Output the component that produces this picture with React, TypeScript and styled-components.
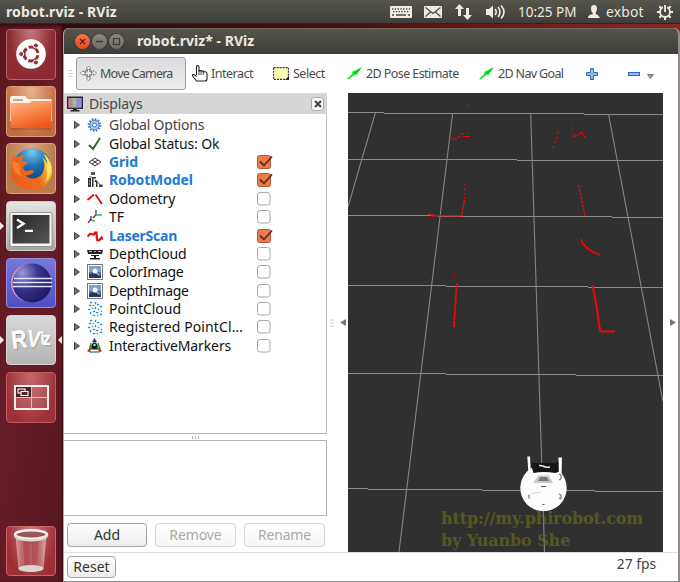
import React from "react";
import styled, { createGlobalStyle, css } from "styled-components";

const Global = createGlobalStyle`
  * { box-sizing: border-box; }
  html, body { margin: 0; padding: 0; overflow: hidden; }
  body { font-family: "Noto Sans", "Open Sans", sans-serif; font-size: 14px; color: #111; }
  svg { display: block; flex: none; }
`;

const Desktop = styled.div`
  width: 680px;
  height: 582px;
  display: flex;
  flex-direction: column;
  background: linear-gradient(90deg, #2e0b0b 0%, #4a0d0d 50%, #8a2a20 100%);
`;

const TopBar = styled.header`
  height: 24px;
  flex: none;
  display: flex;
  align-items: center;
  padding: 0 7px 0 6px;
  background: linear-gradient(#57564d, #3e3d39);
  border-bottom: 1px solid #2b2522;
  color: #ece8e0;
`;

const Text = styled.span<{ $size?: number; $ls?: number; $bold?: boolean; $color?: string }>`
  font-size: ${(p) => p.$size ?? 14}px;
  letter-spacing: ${(p) => p.$ls ?? 0}px;
  font-weight: ${(p) => (p.$bold ? 700 : 400)};
  color: ${(p) => p.$color ?? "inherit"};
  line-height: 18px;
  white-space: nowrap;
`;

const Indicators = styled.div`
  margin-left: auto;
  display: flex;
  align-items: center;
`;

const Indicator = styled.div<{ $w: number }>`
  width: ${(p) => p.$w}px;
  height: 24px;
  display: flex;
  align-items: center;
`;

const Workspace = styled.div`
  flex: 1;
  min-height: 0;
  display: flex;
`;

const Launcher = styled.nav`
  width: 63px;
  flex: none;
  padding: 5px 0 6px 0;
  display: flex;
  flex-direction: column;
  gap: 6.7px;
  background: linear-gradient(100deg, #5d1620 0%, #661d28 50%, #571620 100%);
  box-shadow: inset 0 4px 3px -2px #350c12, inset -2px 0 1px #43151a;
`;

const Slot = styled.div<{ $last?: boolean }>`
  height: 50.5px;
  display: grid;
  grid-template-columns: 6px 50px 7px;
  align-items: center;
  ${(p) => p.$last && css`margin-top: auto;`}
`;

const Tile = styled.div<{ $bg: string; $edge: string }>`
  grid-column: 2;
  height: 50.5px;
  border-radius: 4px;
  border: 1px solid ${(p) => p.$edge};
  background: ${(p) => p.$bg};
  display: flex;
  align-items: center;
  justify-content: center;
  overflow: hidden;
`;

const Pip = styled.i<{ $right?: boolean }>`
  grid-row: 1;
  grid-column: ${(p) => (p.$right ? 3 : 1)};
  justify-self: ${(p) => (p.$right ? "end" : "start")};
  width: 0;
  height: 0;
  border: 4px solid transparent;
  ${(p) =>
    p.$right
      ? css`border-left: 0; border-right-color: #eee; margin-right: 1px;`
      : css`border-right: 0; border-left-color: #eee;`}
`;

const Window = styled.main`
  width: 617px;
  margin-top: 4px;
  display: flex;
  flex-direction: column;
  border-radius: 6px 6px 0 0;
  overflow: hidden;
  background: #fff;
  border-left: 1px solid #aaa6a4;
  border-right: 2px solid #918e87;
  border-bottom: 1px solid #8b8b8b;
`;

const TitleBar = styled.div`
  height: 26px;
  flex: none;
  margin: 0 -2px 0 -1px;
  display: flex;
  align-items: center;
  gap: 2px;
  padding-left: 12px;
  background: linear-gradient(#55544c, #3d3c38);
  border-top: 1px solid #6c6a62;
  color: #ece8df;
`;

const WinButton = styled.div<{ $close?: boolean }>`
  width: 15px;
  height: 15px;
  border-radius: 50%;
  background: ${(p) => (p.$close ? "linear-gradient(#f7754a, #e4491c)" : "linear-gradient(#8b8982, #6d6b65)")};
  box-shadow: 0 0 0 0.6px #2f2d2a;
`;

const Caption = styled.div`
  margin-left: 11px;
  padding-bottom: 1px;
  line-height: 18px;
`;

const Toolbar = styled.div`
  height: 39px;
  flex: none;
  display: flex;
  align-items: center;
  padding-left: 4px;
  color: #4b4b4b;
`;

const Grip = styled.div`
  width: 5px;
  height: 8px;
  margin-right: 3px;
  background: repeating-linear-gradient(#d8d8d8 0 1px, transparent 1px 3px);
`;

const ActiveTool = styled.div`
  width: 110px;
  height: 33px;
  margin-right: 6px;
  border: 1px solid #a0a0a0;
  border-radius: 3px;
  background: linear-gradient(#dcdcdc, #ececec);
  display: flex;
  align-items: center;
  gap: 3px;
  padding-left: 3px;
`;

const Tool = styled.div<{ $w: number; $gap?: number }>`
  width: ${(p) => p.$w}px;
  display: flex;
  align-items: center;
  gap: ${(p) => p.$gap ?? 4}px;
`;

const Body = styled.div`
  height: 459px;
  flex: none;
  display: flex;
`;

const Dock = styled.section`
  width: 263px;
  flex: none;
  display: flex;
  flex-direction: column;
`;

const DockHeader = styled.div`
  height: 21px;
  flex: none;
  display: flex;
  align-items: center;
  padding: 0 3px 0 3px;
  gap: 6px;
  background: #d6d6d6;
  color: #4a4a4a;
`;

const CloseDock = styled.button`
  margin-left: auto;
  width: 13px;
  height: 14px;
  padding: 0;
  border: 1px solid #aaa;
  border-radius: 3px;
  background: #f7f7f7;
  display: flex;
  align-items: center;
  justify-content: center;
`;

const Tree = styled.ul`
  height: 320px;
  flex: none;
  margin: 0;
  padding: 2px 0 0;
  list-style: none;
  border-right: 1px solid #bdbdbd;
  border-bottom: 1px solid #b4b4b4;
`;

const Row = styled.li`
  height: 18.4px;
  display: grid;
  grid-template-columns: 10px 13px 22px 148px 16px;
  align-items: center;
`;

const Check = styled.div`
  width: 16px;
  height: 16px;
`;

const Splitter = styled.div`
  height: 6px;
  flex: none;
  display: flex;
  align-items: center;
  justify-content: center;
  gap: 2px;
  i { width: 1px; height: 3px; background: #b5b5b5; }
`;

const Description = styled.div`
  height: 76px;
  flex: none;
  border: 1px solid #b5b5b5;
  border-left: 0;
`;

const Actions = styled.div`
  display: flex;
  gap: 8px;
  padding: 7px 0 0 3px;
`;

const Button = styled.button<{ $w: number; $h?: number }>`
  width: ${(p) => p.$w}px;
  height: ${(p) => p.$h ?? 24}px;
  padding: 0;
  font-family: inherit;
  display: flex;
  align-items: center;
  justify-content: center;
  border-radius: 4px;
  border: 1px solid #a3a3a3;
  background: linear-gradient(#fff, #ececec);
  color: #333;
  &:disabled {
    border-color: #d4d4d4;
    background: linear-gradient(#fff, #f6f6f6);
    color: #aaa;
  }
`;

const Handle = styled.div<{ $w: number }>`
  width: ${(p) => p.$w}px;
  flex: none;
  display: flex;
  align-items: center;
  justify-content: center;
  gap: 6px;
`;

const RightHandle = styled(Handle)`
  padding-left: 5px;
`;

const Viewport = styled.section`
  width: 315px;
  height: 459px;
  flex: none;
  position: relative;
  background: #303030;
  overflow: hidden;
`;

const Watermark = styled.div`
  position: absolute;
  left: 93px;
  top: 415px;
  font: 700 16px/22px "DejaVu Serif", serif;
  color: rgba(112, 112, 20, 0.62);
  white-space: nowrap;
`;
const MarkLine = styled.span<{ $ls: number }>`
  display: block;
  letter-spacing: ${(p) => p.$ls}px;
`;

const StatusBar = styled.footer`
  flex: 1;
  display: flex;
  justify-content: space-between;
  align-items: flex-start;
  padding: 3px 22px 0 3px;
  border-top: 1px solid #dedede;
  color: #444;
`;

const Fps = styled(Text)`
  margin-top: -1px;
`;

/* ---------- launcher art ---------- */

const DashIcon = () => (
  <svg width="32" height="32" viewBox="0 0 32 32">
    <circle cx="16" cy="16" r="14.8" fill="#fff" />
    <circle cx="16" cy="16" r="7" fill="none" stroke="#962f36" strokeWidth="3" strokeDasharray="12.4 2.2" strokeDashoffset="-1.2" />
    {[180, 60, -60].map((a) => (
      <circle key={a} cx={16 + 9.8 * Math.cos((a * Math.PI) / 180)} cy={16 + 9.8 * Math.sin((a * Math.PI) / 180)} r="2.5" fill="#962f36" stroke="#fff" strokeWidth="1" />
    ))}
  </svg>
);

const FolderIcon = () => (
  <svg width="48" height="48" viewBox="0 0 48 48">
    <defs>
      <linearGradient id="fold" x1="0" y1="0" x2=".5" y2="1">
        <stop offset="0" stopColor="#fdb98c" />
        <stop offset=".5" stopColor="#f98a4c" />
        <stop offset="1" stopColor="#ee5a1b" />
      </linearGradient>
    </defs>
    <path d="M3 11q0-2 2-2h13l3 3h22q2 0 2 2v20H3z" fill="#fbf4ee" />
    <path d="M6 12h10v2H6z" fill="#e8a075" />
    <path d="M3 16h19l3-2h20l-1 25q0 2-2 2H6q-2 0-2-2z" fill="url(#fold)" />
    <path d="M4 42h40" stroke="#7c3d20" strokeWidth="1" opacity=".6" />
  </svg>
);

const FirefoxIcon = () => (
  <svg width="48" height="48" viewBox="0 0 48 48">
    <defs>
      <radialGradient id="ffb" cx=".5" cy=".1" r=".85">
        <stop offset="0" stopColor="#7acdf0" />
        <stop offset=".45" stopColor="#1d70b5" />
        <stop offset="1" stopColor="#123a77" />
      </radialGradient>
      <linearGradient id="fft" x1="0" y1=".7" x2="1" y2=".3">
        <stop offset="0" stopColor="#ea5a1e" />
        <stop offset=".6" stopColor="#ee6f1c" />
        <stop offset="1" stopColor="#ffdc3c" />
      </linearGradient>
    </defs>
    <circle cx="25" cy="22" r="18.800" fill="url(#ffb)" />
    <path d="M5 17c0-3 1-5 2-7 1 1 2 2 3 2 2-1 5-2 8-1-2 1-3 3-3 5 2 0 4 0 6 1-1 3-4 3-5 5 0 2 1 3 3 4 3 0 5-2 8 0-2 4-6 5-9 4 5 6 15 4 18-3 2-5 2-10-1-15 3 2 4 4 5 6 0-4-1-7-3-9 5 4 8 10 8 17 0 11-9 19-20 19C12 45 4 36 4 27c0-4 0-7 1-10z" fill="url(#fft)" />
    <path d="M5 17c3-1 6 0 9 4-2 3-1 7 1 10-6-1-9-6-10-14z" fill="#f48b34" opacity=".75" />
    <path d="M36 9c6 4 9 10 8 17-1 5-3 9-6 11 3-6 3-13 0-19 2 1 3 3 4 4-1-5-3-9-6-13z" fill="#fbe565" />
  </svg>
);

const TerminalIcon = () => (
  <svg width="48" height="48" viewBox="0 0 48 48">
    <defs>
      <linearGradient id="term" x1="0" y1="0" x2="1" y2="1">
        <stop offset="0" stopColor="#262626" />
        <stop offset="1" stopColor="#555" />
      </linearGradient>
    </defs>
    <rect x="3" y="10.500" width="42" height="34" rx="1.500" fill="#f6f6f4" stroke="#777" strokeWidth=".7" />
    <rect x="5.500" y="13" width="37" height="28.500" fill="url(#term)" />
    <path d="M10 17.500l6.500 4.200-6.500 4.200" fill="none" stroke="#fff" strokeWidth="2.400" />
    <path d="M18 28.800h8" stroke="#fff" strokeWidth="2.200" />
  </svg>
);

const EclipseIcon = () => (
  <svg width="48" height="48" viewBox="0 0 48 48">
    <defs>
      <radialGradient id="ecl" cx=".25" cy=".25" r=".9">
        <stop offset="0" stopColor="#9a9add" />
        <stop offset=".45" stopColor="#39338f" />
        <stop offset="1" stopColor="#1b1557" />
      </radialGradient>
    </defs>
    <circle cx="23" cy="24" r="19" fill="#e59bc0" />
    <circle cx="25" cy="24" r="19.500" fill="url(#ecl)" />
    <path d="M7 19.500h38M6 23.500h39M6 27.500h39" stroke="#dfe3ff" strokeWidth="1.300" />
  </svg>
);

const RvizWord = styled.div`
  display: flex;
  align-items: center;
  font-family: "Liberation Sans", sans-serif;
  font-weight: 700;
  color: #fdfdfd;
  -webkit-text-stroke: 0.7px #fdfdfd;
  text-shadow: 1px 1px 1px #777, 0 0 1px #888;
  padding-bottom: 2px;
`;
const RvizLetter = styled.span<{ $s: number; $r: number }>`
  display: inline-block;
  line-height: 26px;
  font-size: ${(p) => p.$s}px;
  transform: rotate(${(p) => p.$r}deg) scaleX(0.84);
  margin: 0 -1px;
`;

const WorkspacesIcon = () => (
  <svg width="48" height="48" viewBox="0 0 48 48">
    <rect x="8" y="13" width="33" height="23" fill="#ffffff18" stroke="#fff" strokeWidth="1.800" />
    <path d="M24.500 13v23M8 24.500h33" stroke="#e7bcbc" strokeWidth="1" />
    <rect x="9" y="14" width="15" height="10" fill="#4d2024" />
    <rect x="11" y="16" width="7" height="4" fill="none" stroke="#fff" strokeWidth="1.100" />
    <rect x="14" y="18.500" width="7" height="4" fill="#4d2024" stroke="#fff" strokeWidth="1.100" />
  </svg>
);

const TrashIcon = () => (
  <svg width="48" height="48" viewBox="0 0 48 48">
    <defs>
      <linearGradient id="tr" x1="0" x2="1" y1="0" y2="0">
        <stop offset="0" stopColor="#d9a5a5" />
        <stop offset=".3" stopColor="#b04c4f" />
        <stop offset=".7" stopColor="#b3565a" />
        <stop offset="1" stopColor="#dcabab" />
      </linearGradient>
    </defs>
    <path d="M8.500 8l3 34q12.500 6 25 0l3-34z" fill="url(#tr)" />
    <ellipse cx="24" cy="41.500" rx="12.500" ry="3.500" fill="#ddd5d2" />
    <ellipse cx="24" cy="7.500" rx="16" ry="4.300" fill="#9b5555" stroke="#f4f1ee" strokeWidth="2.500" />
    <path d="M8 9q1 4 16 4.500Q39 13 40 9" fill="none" stroke="#dcd8d4" strokeWidth="2" />
    <path d="M15 16l2 23M24 17v22M33 16l-2 23" stroke="#c98284" strokeWidth=".5" />
  </svg>
);

/* ---------- tree icons, 16 x 16 ---------- */

const Photo = () => (
  <>
    <rect x=".5" y=".5" width="15" height="15" fill="#fff" stroke="#777" />
    <rect x="2" y="2" width="12" height="12" fill="#4f6d9e" />
    <path d="M2 2h12v6H2z" fill="#7fa0cb" />
    <path d="M2 11q4-3 7-1l5 1v3H2z" fill="#24375f" />
    <circle cx="8" cy="7" r="2.500" fill="#f3f6fa" />
    <path d="M9.500 9l3 2.500" stroke="#eee" strokeWidth="1" />
  </>
);
const Points = () => (
  <path
    d="M3 1h2v1H3zM8 1h1v2H8zM2 4h2v1H2zM6 4h1v1H6zM10 3h2v1h-2zM13 5h2v1h-2zM1 8h2v1H1zM5 7h1v1H5zM8 6h1v2H8zM11 8h1v1h-1zM14 10h1v1h-1zM3 11h1v2H3zM6 10h2v1H6zM9 11h2v1H9zM13 13h2v1h-2zM6 14h2v1H6zM10 14h1v1h-1z"
    fill="#2a8be0"
    stroke="#2a8be0"
    strokeWidth=".4"
  />
);

const treeIcons: Record<string, React.ReactNode> = {
  gear: (
    <>
      <circle cx="7.500" cy="8" r="5.800" fill="none" stroke="#3c78c4" strokeWidth="2" strokeDasharray="1.500 1.500" />
      <circle cx="7.500" cy="8" r="4.800" fill="#a9c8ee" stroke="#3c78c4" strokeWidth="1" />
      <circle cx="7.500" cy="8" r="2" fill="#fff" stroke="#3c78c4" strokeWidth="1" />
    </>
  ),
  ok: <path d="M2 9l4 4L13 2" fill="none" stroke="#1d6f1d" strokeWidth="1.900" />,
  grid: <path d="M8 4l6 4-6 4-6-4zM5 6l6 4M11 6l-6 4" fill="none" stroke="#333" strokeWidth="1" />,
  robot: (
    <>
      <path d="M4 0h4v3H4z" fill="#556" />
      <path d="M1 6h3v9H1z" fill="#333" />
      <path d="M5 5h4v1.500H6.500V15H5zM8 7.500l2.500 1.500v6H9v-5H7.500zM12.500 12.500h3V15H12z" fill="#333" />
      <path d="M2 5h3M11 10l2 3" stroke="#666" />
      <path d="M2 9h1M2 12h1" stroke="#eee" />
    </>
  ),
  odom: <path d="M.5 9L7 3.500M8.500 3.500L15 13" fill="none" stroke="#d91010" strokeWidth="1.800" />,
  tf: (
    <>
      <path d="M4 10L9 5" stroke="#d8c030" />
      <path d="M1 14l3-4M9 6l-3 3" stroke="#c22" strokeWidth="1.400" />
      <path d="M4 7v5M9 1v5" stroke="#23c" strokeWidth="1.300" />
      <path d="M4 11l4 1M9 6h6" stroke="#3b3" strokeWidth="1.300" />
    </>
  ),
  laser: <path d="M.5 8.500l2.500-2.500 4 .5 1-2h1.500l.5 7.500 2 .5 2.500-3 1.500 2" fill="none" stroke="#dc1212" strokeWidth="2.200" />,
  depth: (
    <>
      <path d="M0 4h16l-1 4H1z" fill="#222" />
      <path d="M2 5h3v1H2zM7 5h2v1H7zM11 5h3v1h-3z" fill="#bbb" />
      <path d="M4 9h8v1H4zM7 10h2v2H7zM3 12h10v1.500H3z" fill="#222" />
    </>
  ),
  photo: <Photo />,
  points: <Points />,
  markers: (
    <>
      <path d="M7.500 2l5 9h-10z" fill="#777" />
      <path d="M7.500 0L10 4H5z" fill="#23a" />
      <path d="M4 5L2.500 11H13L11 5" fill="none" stroke="#282" strokeWidth="1.300" />
      <path d="M0 13l3-3 1 5zM15 13l-3-3-1 5z" fill="#c22" />
      <circle cx="7.500" cy="8" r="3" fill="#111" />
      <circle cx="7.500" cy="7" r="1.200" fill="#ddd" />
      <path d="M4 14h7" stroke="#29c" strokeWidth="1.500" />
    </>
  ),
};

type Item = { icon: string; label: string; ls?: number; on?: boolean; plain?: boolean; color?: string };
const items: Item[] = [
  { icon: "gear", label: "Global Options", ls: -0.2, plain: true, color: "#444" },
  { icon: "ok", label: "Global Status: Ok", ls: -0.15, plain: true },
  { icon: "grid", label: "Grid", ls: -0.15, on: true },
  { icon: "robot", label: "RobotModel", ls: -0.1, on: true },
  { icon: "odom", label: "Odometry", ls: -0.1 },
  { icon: "tf", label: "TF" },
  { icon: "laser", label: "LaserScan", ls: -0.25, on: true },
  { icon: "depth", label: "DepthCloud", ls: -0.1 },
  { icon: "photo", label: "ColorImage", ls: -0.3 },
  { icon: "photo", label: "DepthImage", ls: -0.3 },
  { icon: "points", label: "PointCloud", ls: -0.05 },
  { icon: "points", label: "Registered PointCl…", ls: 0.1 },
  { icon: "markers", label: "InteractiveMarkers", ls: -0.12 },
];

const CheckBox = ({ on }: { on?: boolean }) => (
  <svg width="16" height="16" viewBox="0 0 16 16">
    {on ? (
      <>
        <rect x=".5" y="1.500" width="13" height="13" rx="2" fill="#ef7a4a" stroke="#b2583a" />
        <path d="M3 7.500l4 4L15 2.500" fill="none" stroke="#5b3226" strokeWidth="1.800" />
      </>
    ) : (
      <rect x=".5" y="1.500" width="12.500" height="12.500" rx="2.500" fill="#fff" stroke="#a8a8a8" />
    )}
  </svg>
);

const PoseArrow = () => (
  <svg width="15" height="13" viewBox="0 0 15 13">
    <path d="M15 0L9.500 8 7.800 7.500 1.500 12.500 0 12 5.500 6.500 5 5z" fill="#12e62c" />
    <path d="M7 7L13 2" stroke="#0b9d1d" strokeWidth=".8" />
  </svg>
);

const Scene = () => (
  <svg width="315" height="459" viewBox="348 93 315 459">
    <g stroke="#8b8b8b" strokeWidth="1" shapeRendering="crispEdges">
      <path d="M348 112.500h36M384 113.500h200M584 114.500h79M348 159.500h169M517 160.500h146M348 215.500h90M438 216.500h174M612 217.500h51M348 285.500h98M446 286.500h142M588 287.500h75M348 373.500h98M446 374.500h130M576 375.500h87M348 488.500h20M368 489.500h114M482 490.500h113M595 491.500h68" />
    </g>
    <g stroke="#858585" strokeWidth="1.100">
      <path d="M375.300 113L348 207M452.700 113L399 552M530.700 113L544.500 552M608.500 114L663 402" />
    </g>
    <g fill="none" stroke="#ec0808" strokeWidth="1.300">
      <path d="M466.500 105.500h3M466.500 107.500h2" strokeWidth=".8" />
      <path d="M452 139h5M457 137.500l4-1.500M461 134h3M463 136.500h3M466 133.500h2M466 136.500h4" strokeWidth="1" />
      <path d="M558 132l-2 8-3 8" strokeDasharray="2 3" />
      <path d="M571.500 125l1.500 10" strokeDasharray="1.500 2.500" strokeWidth="1" />
      <path d="M573 136.500l4-1 2-1 3-3 1 4 3 2" strokeDasharray="4 1" />
      <path d="M465 184l-1 19" strokeDasharray="1.500 3" />
      <path d="M464.500 200L461.500 216" strokeDasharray="5 .7" />
      <path d="M427 214.500h7M431 215.700h32" strokeDasharray="7 .7" strokeWidth="1.500" />
      <path d="M578.500 185l2 9 4.500 22" strokeDasharray="3 1" />
      <path d="M581 239l2 5 4 4 6 4 7 3" strokeWidth="1.800" />
      <path d="M454.500 274v4" strokeDasharray="1 1" opacity=".7" />
      <path d="M457 283l-1 10-2 34" strokeDasharray="9 .5" strokeWidth="1.800" />
      <path d="M592.500 285l4 21 3.500 24.500 2 1h13" strokeWidth="2" />
    </g>
    <circle cx="543.500" cy="488" r="23.200" fill="#fdfdfd" />
    <path d="M530.500 463l25 0 5-3v11l-5 2q-12-2-22 0z" fill="#161616" />
    <path d="M539 465.500q3 0 5 1t6 .5" stroke="#eee" strokeWidth="1.500" fill="none" />
    <path d="M538 475.500h11l4 7.500h-19.500z" fill="#c9c9ca" />
    <path d="M540 477h7l2 4h-11z" fill="#77777c" />
    <path d="M527.300 456.500h2.700l1 18h-2.500zM558.500 457.500h3.500l-.5 20h-2.500z" fill="#fff" />
    <path d="M541 486.500h5M529 494.500v4M559 494l2 1v4l-2-1M559 474l2 1v4l-2 1M542.500 504.500h2" stroke="#555" strokeWidth="1" fill="none" />
    <path d="M531 493.500l10-1.500" stroke="#ccc" strokeWidth=".8" />
  </svg>
);

export default function App() {
  return (
    <>
      <Global />
      <Desktop>
        <TopBar>
          <Text $size={14} $bold $ls={0.12}>robot.rviz - RViz</Text>
          <Indicators>
            <Indicator $w={34}>
              <svg width="22" height="12" viewBox="0 0 22 12">
                <rect width="22" height="12" rx="1" fill="#efebe3" />
                <path d="M2 3h18M3 5.700h16" stroke="#4c4b45" strokeWidth="1.300" strokeDasharray="1.400 1.400" />
                <path d="M2 9h2M6 9h10M18 9h2" stroke="#4c4b45" strokeWidth="1.400" />
              </svg>
            </Indicator>
            <Indicator $w={31}>
              <svg width="18" height="12" viewBox="0 0 18 12">
                <rect width="18" height="12" rx="1" fill="#efebe3" />
                <path d="M1.500 1.500L9 7.500l7.500-6M1.500 10.500L6.500 6M16.500 10.500L11.500 6" fill="none" stroke="#4c4b45" strokeWidth="1.300" />
              </svg>
            </Indicator>
            <Indicator $w={31}>
              <svg width="17" height="16" viewBox="0 0 17 16">
                <path d="M4.500 0L9 5H6v7H3V5H0zM12.500 16L17 11h-3V4h-3v7H8z" fill="#efebe3" />
              </svg>
            </Indicator>
            <Indicator $w={32}>
              <svg width="20" height="16" viewBox="0 0 20 16">
                <path d="M0 5h3l4-3.500v13L3 11H0z" fill="#efebe3" />
                <path d="M9 5q2.500 3 0 6M12 3q4 5 0 10M15 1.500q6 6.500 0 13" fill="none" stroke="#efebe3" strokeWidth="1.600" />
              </svg>
            </Indicator>
            <Indicator $w={70}><Text $size={13.5}>10:25 PM</Text></Indicator>
            <Indicator $w={18}>
              <svg width="12" height="13" viewBox="0 0 12 13">
                <path d="M6 0q3 0 3 3.500T7.500 8q0 1 1.500 1.500T12 13H0q0-3 3-3.500T4.500 8Q3 7 3 3.500T6 0z" fill="#efebe3" />
              </svg>
            </Indicator>
            <Indicator $w={51}><Text $size={13.8} $ls={0.2}>exbot</Text></Indicator>
            <svg width="16" height="16" viewBox="0 0 16 16">
              <circle cx="8" cy="8" r="5" fill="none" stroke="#efebe3" strokeWidth="1.800" />
              <path d="M8 13v3M0 8h3M13 8h3M2.300 2.300l2 2M13.700 2.300l-2 2M2.300 13.700l2-2M13.700 13.700l-2-2" stroke="#efebe3" strokeWidth="2" />
              <path d="M8 0v8" stroke="#4c4b45" strokeWidth="4" />
              <path d="M8 1v7" stroke="#efebe3" strokeWidth="1.800" />
            </svg>
          </Indicators>
        </TopBar>

        <Workspace>
          <Launcher>
            <Slot><Tile $edge="#b2656a" $bg="radial-gradient(ellipse at 50% 0, #c07a7e, #8c2b34 65%)"><DashIcon /></Tile></Slot>
            <Slot><Tile $edge="#dc9d78" $bg="radial-gradient(ellipse at 50% 0, #eab48e, #c06c40 75%)"><FolderIcon /></Tile></Slot>
            <Slot><Tile $edge="#dba47c" $bg="radial-gradient(ellipse at 50% 0, #dba67e, #b97a48 75%)"><FirefoxIcon /></Tile></Slot>
            <Slot><Pip /><Tile $edge="#d0cdca" $bg="linear-gradient(#e4e4e2, #a5a5a5)"><TerminalIcon /></Tile></Slot>
            <Slot><Tile $edge="#8f8fe6" $bg="linear-gradient(#7777da, #4f4fc4)"><EclipseIcon /></Tile></Slot>
            <Slot>
              <Pip />
              <Tile $edge="#d8d4d3" $bg="linear-gradient(#d8d8d8, #b4b4b4)">
                <RvizWord>
                  <RvizLetter $s={25} $r={-7}>R</RvizLetter>
                  <RvizLetter $s={23} $r={8}>V</RvizLetter>
                  <RvizLetter $s={17} $r={-3}>i</RvizLetter>
                  <RvizLetter $s={19} $r={0}>z</RvizLetter>
                </RvizWord>
              </Tile>
              <Pip $right />
            </Slot>
            <Slot><Tile $edge="#c25a5e" $bg="radial-gradient(ellipse at 50% 0, #c46c6d, #9c3238 75%)"><WorkspacesIcon /></Tile></Slot>
            <Slot $last><Tile $edge="#cc6468" $bg="radial-gradient(ellipse at 50% 0, #cc7a7a, #9e2f37 75%)"><TrashIcon /></Tile></Slot>
          </Launcher>

          <Window>
            <TitleBar>
              <WinButton $close>
                <svg width="15" height="15" viewBox="0 0 15 15"><path d="M5 5l5 5M10 5l-5 5" stroke="#5b2111" strokeWidth="1.300" /></svg>
              </WinButton>
              <WinButton>
                <svg width="15" height="15" viewBox="0 0 15 15"><path d="M4 7.500h7" stroke="#3a3935" strokeWidth="1.300" /></svg>
              </WinButton>
              <WinButton>
                <svg width="15" height="15" viewBox="0 0 15 15"><rect x="4.500" y="4.500" width="6" height="6" fill="none" stroke="#3a3935" strokeWidth="1.200" /></svg>
              </WinButton>
              <Caption><Text $size={14} $bold $ls={0.05}>robot.rviz* - RViz</Text></Caption>
            </TitleBar>

            <Toolbar>
              <Grip />
              <ActiveTool>
                <svg width="17" height="17" viewBox="0 0 17 17">
                  <path d="M8.500 1L11 4H9.500v3h4V5.500L16.500 8l-3 2.500V9.500h-4v3.500H11l-2.500 3L6 13h1.500V9.500h-4v1L.5 8l3-2.500V7h4V4H6z" fill="#f5f5f5" stroke="#555" strokeWidth=".8" strokeDasharray="1.500 .7" />
                  <circle cx="8.500" cy="8" r="3.500" fill="none" stroke="#666" strokeWidth=".8" />
                </svg>
                <Text $size={12.5} $ls={-0.75}>Move Camera</Text>
              </ActiveTool>
              <Tool $w={81} $gap={3}>
                <svg width="16" height="17" viewBox="0 0 16 17">
                  <path d="M4.500 10V2q0-1.500 1-1.500T7 2v5l0-1.500h2V7l0-1h2.300v1.500l0-.7h2q1.700 0 1.700 2V14q0 2-2 2H4.500L1 11.500Q0 10 1 9.500t3.500 2" fill="#fff" stroke="#222" strokeWidth="1.100" />
                  <path d="M7 6v4M9 7v3M11.300 7v3" stroke="#222" strokeWidth=".8" />
                </svg>
                <Text $size={12.5} $ls={-0.5}>Interact</Text>
              </Tool>
              <Tool $w={74}>
                <svg width="16" height="13" viewBox="0 0 16 13">
                  <rect x=".6" y=".6" width="14.800" height="11.800" fill="#fbfbb4" stroke="#333" strokeWidth="1.100" strokeDasharray="2 1" />
                  <path d="M16 9v4h-4z" fill="#222" />
                </svg>
                <Text $size={12.5} $ls={-0.5}>Select</Text>
              </Tool>
              <Tool $w={132}><PoseArrow /><Text $size={12.5} $ls={-0.58}>2D Pose Estimate</Text></Tool>
              <Tool $w={107}><PoseArrow /><Text $size={12.5} $ls={-0.65}>2D Nav Goal</Text></Tool>
              <Tool $w={42}>
                <svg width="12" height="12" viewBox="0 0 12 12">
                  <path d="M4.500.5h3v4h4v3h-4v4h-3v-4h-4v-3h4z" fill="#8ebbf0" stroke="#2868b4" />
                </svg>
              </Tool>
              <Tool $w={19}>
                <svg width="12" height="4" viewBox="0 0 12 4">
                  <rect x=".5" y=".5" width="11" height="3" fill="#8ebbf0" stroke="#2868b4" />
                </svg>
              </Tool>
              <Tool $w={8}>
                <svg width="7" height="11" viewBox="0 0 7 11"><path d="M.5 6.500h6L3.500 10.500z" fill="#999" stroke="#666" strokeWidth=".8" /></svg>
              </Tool>
            </Toolbar>

            <Body>
              <Dock>
                <DockHeader>
                  <svg width="16" height="16" viewBox="0 0 16 16">
                    <rect x=".7" y="1.200" width="14.600" height="11" fill="#ad77c4" stroke="#222" strokeWidth="1.400" />
                    <path d="M1.500 2h4v9.500h-4z" fill="#d67b83" />
                    <path d="M5.500 2h4v9.500h-4z" fill="#87ca8e" />
                    <path d="M9.500 2h5v9.500h-5z" fill="#948be0" />
                    <path d="M6 12.500h4v1.500h2.500v1.500h-9V14H6z" fill="#222" />
                  </svg>
                  <Text $size={14} $ls={-0.1}>Displays</Text>
                  <CloseDock aria-label="Close">
                    <svg width="8" height="8" viewBox="0 0 8 8"><path d="M1 1l6 6M7 1L1 7" stroke="#444" strokeWidth="2" /></svg>
                  </CloseDock>
                </DockHeader>
                <Tree>
                  {items.map((it) => (
                    <Row key={it.label}>
                      <span />
                      <svg width="6" height="8" viewBox="0 0 6 8"><path d="M.5.5v7L5.500 4z" fill="#777" stroke="#333" strokeWidth=".9" /></svg>
                      <svg width="16" height="16" viewBox="0 0 16 16">{treeIcons[it.icon]}</svg>
                      <Text $size={14} $ls={it.ls} $bold={it.on} $color={it.on ? "#1f7ad0" : it.color}>{it.label}</Text>
                      <Check>{!it.plain && <CheckBox on={it.on} />}</Check>
                    </Row>
                  ))}
                </Tree>
                <Splitter><i /><i /><i /></Splitter>
                <Description />
                <Actions>
                  <Button $w={80}><Text>Add</Text></Button>
                  <Button $w={81} disabled><Text $ls={-0.1}>Remove</Text></Button>
                  <Button $w={81} disabled><Text $ls={-0.2}>Rename</Text></Button>
                </Actions>
              </Dock>
              <Handle $w={21}>
                <svg width="4" height="8" viewBox="0 0 4 8"><path d="M0 1h4M0 4h4M0 7h4" stroke="#ccc" /></svg>
                <svg width="6" height="7" viewBox="0 0 6 7"><path d="M6 0v7L0 3.500z" fill="#777" /></svg>
              </Handle>
              <Viewport>
                <Scene />
                <Watermark>
                  <MarkLine $ls={-0.15}>http://my.phirobot.com</MarkLine>
                  <MarkLine $ls={-0.1}>by Yuanbo She</MarkLine>
                </Watermark>
              </Viewport>
              <RightHandle $w={15}>
                <svg width="6" height="7" viewBox="0 0 6 7"><path d="M0 0v7l6-3.500z" fill="#777" /></svg>
              </RightHandle>
            </Body>

            <StatusBar>
              <Button $w={49} $h={22}><Text>Reset</Text></Button>
              <Fps $size={13.8}>27 fps</Fps>
            </StatusBar>
          </Window>
        </Workspace>
      </Desktop>
    </>
  );
}
